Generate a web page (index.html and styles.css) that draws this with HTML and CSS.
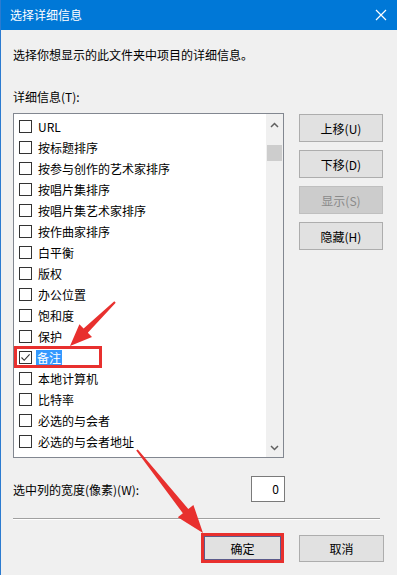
FILE: index.html
```html
<!DOCTYPE html>
<html lang="zh-CN">
<head>
  <meta charset="UTF-8">
  <title>选择详细信息</title>
  <link rel="stylesheet" href="styles.css">
</head>
<body>
  <div class="window">
    <div class="titlebar">
      <span class="title">选择详细信息</span>
      <svg class="close" width="12" height="12" viewBox="0 0 12 12">
        <path d="M1 1 L11 11 M11 1 L1 11" stroke="#fff" stroke-width="1.2" fill="none"/>
      </svg>
    </div>

    <div class="content">
      <p class="intro">选择你想显示的此文件夹中项目的详细信息。</p>
      <p class="field-label">详细信息(T):</p>

      <div class="main">
        <div class="list">
          <ul class="items">
            <li><span class="check"></span><span class="name">URL</span></li>
            <li><span class="check"></span><span class="name">按标题排序</span></li>
            <li><span class="check"></span><span class="name">按参与创作的艺术家排序</span></li>
            <li><span class="check"></span><span class="name">按唱片集排序</span></li>
            <li><span class="check"></span><span class="name">按唱片集艺术家排序</span></li>
            <li><span class="check"></span><span class="name">按作曲家排序</span></li>
            <li><span class="check"></span><span class="name">白平衡</span></li>
            <li><span class="check"></span><span class="name">版权</span></li>
            <li><span class="check"></span><span class="name">办公位置</span></li>
            <li><span class="check"></span><span class="name">饱和度</span></li>
            <li><span class="check"></span><span class="name">保护</span></li>
            <li class="selected">
              <span class="check">
                <svg width="11" height="11" viewBox="0 0 11 11"><path d="M1.5 5.5 L4.2 8.3 L9.6 2.4" stroke="#333" stroke-width="1.1" fill="none"/></svg>
              </span><span class="name">备注</span>
            </li>
            <li><span class="check"></span><span class="name">本地计算机</span></li>
            <li><span class="check"></span><span class="name">比特率</span></li>
            <li><span class="check"></span><span class="name">必选的与会者</span></li>
            <li><span class="check"></span><span class="name">必选的与会者地址</span></li>
          </ul>
          <div class="scrollbar">
            <svg class="arrow-up" width="9" height="6" viewBox="0 0 9 6"><path d="M1 5 L4.5 1.5 L8 5" stroke="#606060" stroke-width="1.5" fill="none"/></svg>
            <div class="thumb"></div>
            <svg class="arrow-down" width="9" height="6" viewBox="0 0 9 6"><path d="M1 1 L4.5 4.5 L8 1" stroke="#606060" stroke-width="1.5" fill="none"/></svg>
          </div>
        </div>

        <div class="side">
          <button class="btn">上移(U)</button>
          <button class="btn">下移(D)</button>
          <button class="btn disabled">显示(S)</button>
          <button class="btn">隐藏(H)</button>
        </div>
      </div>

      <div class="width-row">
        <span>选中列的宽度(像素)(W):</span>
        <div class="num-input">0</div>
      </div>

      <div class="separator"></div>

      <div class="footer">
        <div class="mark-box"><button class="btn ok">确定</button></div>
        <button class="btn cancel">取消</button>
      </div>
    </div>

    <!-- 标注：红框和箭头 -->
    <div class="mark-row"></div>
    <svg class="arrows" width="397" height="575" viewBox="0 0 397 575">
      <polygon points="114.3,301.3 83.6,328.5 79.4,324.2 70,346 92,337 87.8,332.7 115.7,302.7" fill="#e8302e"/>
      <polygon points="136.2,450.6 182.9,513.3 177.8,517.3 203,533 193.4,504.9 188.3,508.9 137.8,449.4" fill="#e8302e"/>
    </svg>
  </div>
</body>
</html>
```

FILE: styles.css
```css
* {
  box-sizing: border-box;
}
body {
  margin: 0;
  font-family: "Noto Sans CJK SC", "Microsoft YaHei", sans-serif;
  font-size: 12px;
  color: #000;
}
p {
  margin: 0;
}
.window {
  position: relative;
  width: 397px;
  height: 575px;
  overflow: hidden;
  background: #f0f0f0;
  border-left: 1px solid #2b7bd0;
}
.titlebar {
  height: 30px;
  background: #0078d7;
  display: flex;
  align-items: center;
  justify-content: space-between;
  padding: 0 9px 0 9px;
  color: #fff;
}
.title {
  font-size: 12px;
  line-height: 16px;
}
.close {
  margin-right: 1px;
}
.content {
  padding: 0 13px 0 12px;
}
.intro {
  margin-top: 17px;
  line-height: 16px;
}
.field-label {
  margin-top: 26px;
  line-height: 16px;
}
.main {
  display: flex;
  margin-top: 8px;
}
.list {
  width: 271px;
  height: 345px;
  border: 1px solid #828790;
  background: #fff;
  display: flex;
}
.items {
  list-style: none;
  margin: 0;
  padding: 2px 0 0 0;
  flex: 1;
}
.items li {
  height: 21px;
  display: flex;
  align-items: center;
  padding-left: 5px;
  line-height: 16px;
}
.check {
  width: 13px;
  height: 13px;
  border: 1px solid #333;
  background: #fff;
  display: flex;
  align-items: center;
  justify-content: center;
}
.name {
  margin-left: 5px;
  padding: 0 1px;
}
.selected .name {
  margin-left: 4px;
  background: #3399ff;
  color: #fff;
}
.scrollbar {
  width: 17px;
  background: #f0f0f0;
  display: flex;
  flex-direction: column;
  align-items: center;
}
.arrow-up {
  margin-top: 8px;
}
.thumb {
  width: 15px;
  height: 16px;
  margin-top: 17px;
  background: #cdcdcd;
}
.arrow-down {
  margin-top: auto;
  margin-bottom: 6px;
}
.side {
  margin-left: 15px;
  padding-top: 1px;
  display: flex;
  flex-direction: column;
  gap: 8px;
}
.btn {
  width: 84px;
  height: 28px;
  border: 1px solid #adadad;
  background: #e1e1e1;
  font-family: inherit;
  font-size: 12px;
  color: #000;
  padding: 0;
}
.btn.disabled {
  background: #cccccc;
  border-color: #bfbfbf;
  color: #8a8a8a;
}
.width-row {
  width: 272px;
  margin-top: 18px;
  display: flex;
  align-items: center;
  justify-content: space-between;
}
.num-input {
  width: 34px;
  height: 26px;
  border: 1px solid #7a7a7a;
  background: #fff;
  text-align: right;
  padding-right: 5px;
  line-height: 24px;
}
.separator {
  width: 367px;
  height: 2px;
  margin-top: 16px;
  border-top: 1px solid #a0a0a0;
  border-bottom: 1px solid #fff;
}
.footer {
  display: flex;
  justify-content: flex-end;
  align-items: center;
  margin-top: 13px;
  padding-right: 0;
}
.mark-box {
  border: 3px solid #e8302e;
  margin-right: 15px;
}
.btn.ok {
  width: 77px;
  height: 24px;
  display: block;
  border-color: #5b5b8b;
}
.btn.cancel {
  width: 85px;
  height: 27px;
}
.mark-row {
  position: absolute;
  left: 13px;
  top: 346px;
  width: 88px;
  height: 22px;
  border: 3px solid #e8302e;
}
.arrows {
  position: absolute;
  left: -1px;
  top: 0;
  pointer-events: none;
}
```
